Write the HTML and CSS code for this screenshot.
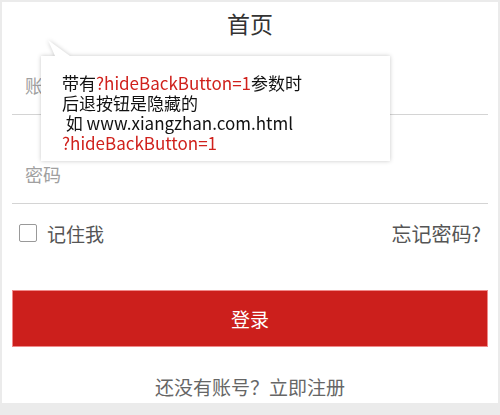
FILE: index.html
```html
<!DOCTYPE html>
<html lang="zh-CN">
<head>
    <meta charset="UTF-8">
    <meta name="viewport" content="width=device-width, initial-scale=1.0">
    <title>首页</title>
    <link rel="stylesheet" href="styles.css">
</head>
<body>
    <div class="page">
        <div class="header">首页</div>

        <div class="form">
            <div class="field">
                <input class="input" type="text" placeholder="账号">
            </div>
            <div class="field field-pass">
                <input class="input" type="password" placeholder="密码">
            </div>

            <div class="remember-row">
                <label class="remember">
                    <span class="checkbox"></span>
                    记住我
                </label>
                <a class="forgot" href="#">忘记密码?</a>
            </div>

            <button class="button" type="button">登录</button>

            <div class="register">还没有账号？立即注册</div>
        </div>

        <!-- tip shown over the form -->
        <div class="tip">
            <div class="tip-box">
                带有<span class="red">?hideBackButton=1</span>参数时<br>
                后退按钮是隐藏的<br>
                &nbsp;如 www.xiangzhan.com.html<br>
                <span class="red">?hideBackButton=1</span>
            </div>
        </div>
    </div>
</body>
</html>
```

FILE: styles.css
```css
body {
    margin: 0;
    height: 415px;
    background-color: #ebebeb;
    font-family: "Noto Sans CJK SC", "Noto Sans", sans-serif;
}

.page {
    position: relative;
    margin: 2px 2px 0;
    height: 401px;
    background-color: #fff;
}

.header {
    height: 42px;
    line-height: 42px;
    text-align: center;
    font-size: 23px;
    color: #333;
    margin-bottom: 12px;
}

.form {
    padding: 0 10px;
}

.field {
    border-bottom: 1px solid #d4d4d4;
}

.field-pass {
    margin-top: 30px;
}

.input {
    display: block;
    width: 100%;
    height: 58px;
    box-sizing: border-box;
    padding: 0 13px;
    border: none;
    outline: none;
    background: transparent;
    font-family: inherit;
    font-size: 18px;
    color: #333;
}

.input::placeholder {
    color: #a0a0a0;
}

.remember-row {
    display: flex;
    justify-content: space-between;
    align-items: center;
    height: 58px;
    padding: 0 7px 0 7px;
    font-size: 19px;
    color: #555;
}

.remember {
    display: flex;
    align-items: center;
    gap: 10px;
}

.checkbox {
    width: 16px;
    height: 16px;
    border: 1.5px solid #999;
    border-radius: 2px;
}

.forgot {
    color: #555;
    font-size: 20px;
    text-decoration: none;
}

.button {
    display: block;
    width: 100%;
    height: 57px;
    margin-top: 28px;
    border: 1px solid #f08a8a;
    background-color: #cc1f1c;
    color: #fff;
    font-family: inherit;
    font-size: 19px;
    cursor: pointer;
}

.register {
    margin-top: 28px;
    line-height: 24px;
    text-align: center;
    font-size: 19px;
    color: #666;
}

.tip {
    position: absolute;
    left: 39px;
    top: 54px;
    filter: drop-shadow(0 0 2px rgba(0, 0, 0, 0.22));
}

.tip::before {
    content: "";
    position: absolute;
    left: 7px;
    top: -16px;
    width: 22px;
    height: 16px;
    background-color: #fff;
    clip-path: polygon(0 0, 7px 16px, 22px 16px);
}

.tip-box {
    width: 328px;
    height: 88px;
    padding: 17px 0 0 21px;
    background-color: #fff;
    font-size: 17px;
    line-height: 20px;
    color: #111;
}

.red {
    color: #d0211c;
}
```
